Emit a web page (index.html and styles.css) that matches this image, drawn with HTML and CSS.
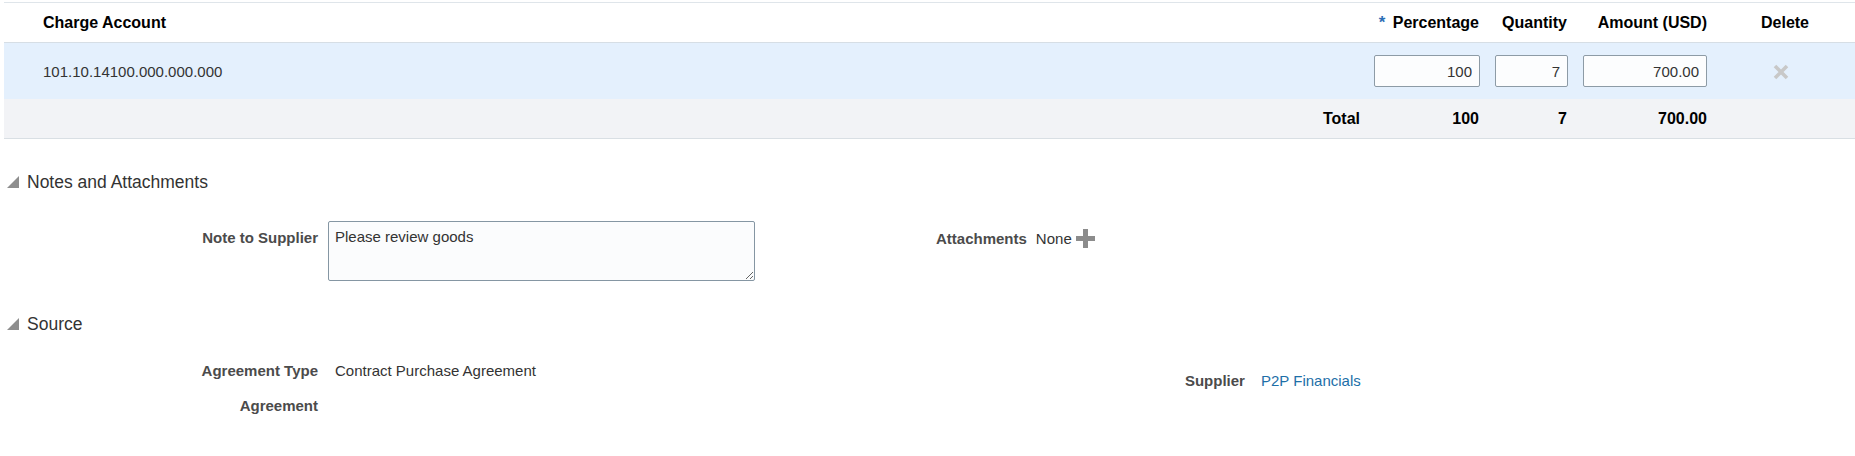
FILE: index.html
```html
<!DOCTYPE html>
<html lang="en">
<head>
    <meta charset="UTF-8">
    <meta name="viewport" content="width=device-width, initial-scale=1.0">
    <title>Distribution</title>
    <link rel="stylesheet" href="styles.css">
</head>
<body>
    <div class="dist-table">
        <div class="row head">
            <div class="cell account">Charge Account</div>
            <div class="cell num"><span class="req">*</span> Percentage</div>
            <div class="cell num">Quantity</div>
            <div class="cell num">Amount (USD)</div>
            <div class="cell center">Delete</div>
        </div>
        <div class="row data">
            <div class="cell account">101.10.14100.000.000.000</div>
            <div class="cell num"><input class="num-input pct" type="text" value="100"></div>
            <div class="cell num"><input class="num-input qty" type="text" value="7"></div>
            <div class="cell num"><input class="num-input amt" type="text" value="700.00"></div>
            <div class="cell center">
                <svg class="del-icon" width="16" height="16" viewBox="0 0 16 16">
                    <path d="M2 2 L14 14 M14 2 L2 14" stroke="#c8c8c8" stroke-width="3.6"/>
                </svg>
            </div>
        </div>
        <div class="row total">
            <div class="cell total-label">Total</div>
            <div class="cell num">100</div>
            <div class="cell num">7</div>
            <div class="cell num">700.00</div>
            <div class="cell"></div>
        </div>
    </div>

    <section class="panel notes">
        <h2 class="panel-title">
            <svg class="disclosure" width="12" height="12" viewBox="0 0 12 12"><polygon points="12,0 12,12 0,12" fill="#8e8e8e"/></svg>
            Notes and Attachments
        </h2>
        <div class="panel-body">
            <div class="form-col left">
                <div class="field">
                    <label class="label">Note to Supplier</label>
                    <textarea class="note">Please review goods</textarea>
                </div>
            </div>
            <div class="form-col attach">
                <div class="field">
                    <span class="label">Attachments</span>
                    <span class="value plain">None</span>
                    <svg class="add-icon" width="19" height="19" viewBox="0 0 19 19">
                        <rect x="7" y="0" width="5" height="19" fill="#8c8c8c"/>
                        <rect x="0" y="7" width="19" height="5" fill="#8c8c8c"/>
                    </svg>
                </div>
            </div>
        </div>
    </section>

    <section class="panel source">
        <h2 class="panel-title">
            <svg class="disclosure" width="12" height="12" viewBox="0 0 12 12"><polygon points="12,0 12,12 0,12" fill="#8e8e8e"/></svg>
            Source
        </h2>
        <div class="panel-body">
            <div class="form-col left">
                <div class="field line">
                    <span class="label">Agreement Type</span>
                    <span class="value">Contract Purchase Agreement</span>
                </div>
                <div class="field line">
                    <span class="label">Agreement</span>
                    <span class="value"></span>
                </div>
            </div>
            <div class="form-col supplier">
                <div class="field line">
                    <span class="label">Supplier</span>
                    <a class="value link" href="#">P2P Financials</a>
                </div>
            </div>
        </div>
    </section>
</body>
</html>
```

FILE: styles.css
```css
body,html{
    margin: 0;
    padding: 0;
}

body{
    font-family: "Liberation Sans", Arial, sans-serif;
    font-size: 15px;
    color: #333;
    background: #fff;
}

/* distribution table */
.dist-table{
    margin: 2px 0 0 4px;
    border-top: 1px solid #dfe5ea;
    border-bottom: 1px solid #d9dfe4;
}

.row{
    display: grid;
    grid-template-columns: 1fr 121px 88px 140px 140px;
    align-items: center;
}

.cell{
    padding: 0 8px;
}

.cell.account{
    padding-left: 39px;
}

.cell.num{
    text-align: right;
}

.cell.center{
    text-align: center;
}

.cell.total-label{
    text-align: right;
    padding-right: 6px;
}

.head{
    height: 39px;
    font-size: 16px;
    font-weight: bold;
    color: #000;
    border-bottom: 1px solid #d6dee5;
}

.req{
    color: #2e6fb6;
    font-size: 17px;
    margin-right: 3px;
}

.data{
    height: 56px;
    background: #e4f0fd;
    color: #333;
    font-size: 15px;
}

.total{
    height: 39px;
    background: #f2f3f6;
    font-size: 16px;
    font-weight: bold;
    color: #000;
}

.num-input{
    box-sizing: border-box;
    height: 32px;
    padding: 0 7px;
    border: 1px solid #8d9ba6;
    border-radius: 2px;
    background: #fcfdfe;
    font-family: inherit;
    font-size: 15px;
    color: #333;
    text-align: right;
    vertical-align: middle;
}

.num-input.pct{ width: 106px; }
.num-input.qty{ width: 73px; }
.num-input.amt{ width: 124px; }

.del-icon{
    display: inline-block;
    vertical-align: middle;
    margin-right: 8px;
}

/* collapsible panels */
.panel-title{
    display: flex;
    align-items: center;
    gap: 8px;
    margin: 0;
    padding-left: 7px;
    height: 24px;
    font-size: 17.5px;
    font-weight: normal;
    color: #333;
}

.notes{
    margin-top: 31px;
}

.source{
    margin-top: 31px;
}

.panel-body{
    display: flex;
}

.notes .panel-body{
    padding-top: 27px;
}

.source .panel-body{
    padding-top: 17px;
}

.form-col{
    flex: none;
}

.field{
    display: flex;
    align-items: flex-start;
}

.label{
    font-weight: bold;
    color: #4b4b4b;
    text-align: right;
}

.left .label{
    width: 318px;
    padding-top: 8px;
    margin-right: 10px;
}

.note{
    box-sizing: border-box;
    width: 427px;
    height: 60px;
    padding: 6px;
    border: 1px solid #8596a3;
    border-radius: 2px;
    background: #fbfcfd;
    font-family: inherit;
    font-size: 15px;
    color: #333;
}

.attach{
    margin-left: 181px;
    padding-top: 8px;
}

.attach .field{
    align-items: center;
}

.attach .value{
    margin-left: 9px;
}

.add-icon{
    margin-left: 4px;
}

.field.line{
    height: 35px;
    align-items: center;
}

.field.line .label{
    padding-top: 0;
}

.value{
    padding-left: 7px;
}

.plain{
    padding-left: 0;
}

.supplier{
    margin-left: 649px;
    padding-top: 10px;
}

.supplier .label{
    margin-right: 9px;
}

.link{
    color: #1d6fa8;
    text-decoration: none;
}
```
